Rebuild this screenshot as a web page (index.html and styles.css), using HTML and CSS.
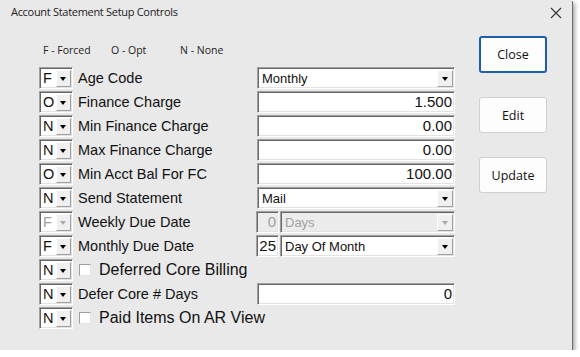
FILE: index.html
```html
<!DOCTYPE html>
<html>
<head lang="en">
    <meta charset="UTF-8">
    <title>Account Statement Setup Controls</title>
    <link rel="stylesheet" href="styles.css">
</head>
<body>
<div class="window">
    <div class="titlebar">
        <span class="title">Account Statement Setup Controls</span>
        <svg class="close-x" width="12" height="12" viewBox="0 0 12 12">
            <path d="M1 1 L11 11 M11 1 L1 11" stroke="#333" stroke-width="1.1" fill="none"/>
        </svg>
    </div>
    <div class="body">
        <div class="form">
            <div class="legend">
                <span class="leg leg-f">F - Forced</span>
                <span class="leg leg-o">O - Opt</span>
                <span class="leg">N - None</span>
            </div>

            <div class="row">
                <div class="code"><span class="code-val">F</span><span class="btn-drop"><i class="tri"></i></span></div>
                <span class="label">Age Code</span>
                <div class="field select"><span class="sel-text">Monthly</span><span class="btn-drop"><i class="tri"></i></span></div>
            </div>
            <div class="row">
                <div class="code"><span class="code-val">O</span><span class="btn-drop"><i class="tri"></i></span></div>
                <span class="label">Finance Charge</span>
                <div class="field num">1.500</div>
            </div>
            <div class="row">
                <div class="code"><span class="code-val">N</span><span class="btn-drop"><i class="tri"></i></span></div>
                <span class="label">Min Finance Charge</span>
                <div class="field num">0.00</div>
            </div>
            <div class="row">
                <div class="code"><span class="code-val">N</span><span class="btn-drop"><i class="tri"></i></span></div>
                <span class="label">Max Finance Charge</span>
                <div class="field num">0.00</div>
            </div>
            <div class="row">
                <div class="code"><span class="code-val">O</span><span class="btn-drop"><i class="tri"></i></span></div>
                <span class="label">Min Acct Bal For FC</span>
                <div class="field num">100.00</div>
            </div>
            <div class="row">
                <div class="code"><span class="code-val">N</span><span class="btn-drop"><i class="tri"></i></span></div>
                <span class="label">Send Statement</span>
                <div class="field select"><span class="sel-text">Mail</span><span class="btn-drop"><i class="tri"></i></span></div>
            </div>
            <div class="row">
                <div class="code disabled"><span class="code-val">F</span><span class="btn-drop"><i class="tri"></i></span></div>
                <span class="label">Weekly Due Date</span>
                <div class="pair">
                    <div class="field day disabled">0</div>
                    <div class="field select disabled"><span class="sel-text">Days</span><span class="btn-drop"><i class="tri"></i></span></div>
                </div>
            </div>
            <div class="row">
                <div class="code"><span class="code-val">F</span><span class="btn-drop"><i class="tri"></i></span></div>
                <span class="label">Monthly Due Date</span>
                <div class="pair">
                    <div class="field day">25</div>
                    <div class="field select"><span class="sel-text">Day Of Month</span><span class="btn-drop"><i class="tri"></i></span></div>
                </div>
            </div>
            <div class="row">
                <div class="code"><span class="code-val">N</span><span class="btn-drop"><i class="tri"></i></span></div>
                <span class="check"></span>
                <span class="check-label">Deferred Core Billing</span>
            </div>
            <div class="row">
                <div class="code"><span class="code-val">N</span><span class="btn-drop"><i class="tri"></i></span></div>
                <span class="label">Defer Core # Days</span>
                <div class="field num">0</div>
            </div>
            <div class="row">
                <div class="code"><span class="code-val">N</span><span class="btn-drop"><i class="tri"></i></span></div>
                <span class="check"></span>
                <span class="check-label">Paid Items On AR View</span>
            </div>
        </div>
        <div class="actions">
            <button class="btn btn-default">Close</button>
            <button class="btn">Edit</button>
            <button class="btn">Update</button>
        </div>
    </div>
</div>
</body>
</html>
```

FILE: styles.css
```css
*{
    margin: 0;
    padding: 0;
    box-sizing: border-box;
}
body{
    background: #fff;
    font-family: "Liberation Sans", Arial, sans-serif;
}
.window{
    width: 572px;
    height: 350px;
    background: #e9e9e9;
    box-shadow: 1px 1px 0 #6e6e6e, 3px 3px 4px rgba(0,0,0,0.35);
}
.titlebar{
    height: 30px;
    display: flex;
    justify-content: space-between;
    padding: 4px 10px 0 11px;
}
.title{
    font-family: "Open Sans", "Noto Sans", sans-serif;
    font-size: 11px;
    letter-spacing: -0.3px;
    line-height: 16px;
    color: #222;
}
.close-x{
    margin-top: 3px;
}
.body{
    display: flex;
    padding-left: 39px;
}
.form{
    width: 416px;
}
.legend{
    height: 37px;
    padding: 13px 0 0 4px;
    font-family: "Open Sans", "Noto Sans", sans-serif;
    font-size: 10.5px;
    line-height: 14px;
    color: #222;
    display: flex;
}
.leg-f{
    width: 68px;
}
.leg-o{
    width: 69px;
}
.row{
    height: 22px;
    margin-bottom: 2px;
    display: flex;
    align-items: center;
}
.code{
    width: 34px;
    height: 22px;
    display: flex;
    background: #fff;
    border: 1px solid;
    border-color: #a0a0a0 #fff #fff #a0a0a0;
    box-shadow: inset 1px 1px 0 #696969, inset -1px -1px 0 #e3e3e3;
    padding: 2px 1px 1px 2px;
}
.code-val{
    width: 14px;
    font-size: 14.5px;
    line-height: 17px;
    padding-left: 1px;
    color: #111;
}
.btn-drop{
    width: 16px;
    height: 17px;
    background: #f0f0f0;
    border: 1px solid;
    border-color: #fff #a0a0a0 #a0a0a0 #fff;
    display: flex;
    align-items: center;
    justify-content: center;
}
.tri{
    width: 0;
    height: 0;
    border-left: 3.5px solid transparent;
    border-right: 3.5px solid transparent;
    border-top: 4px solid #000;
}
.disabled .code-val,
.disabled .sel-text{
    color: #a0a0a0;
}
.disabled .tri{
    border-top-color: #a8a8a8;
}
.label{
    width: 184px;
    padding-left: 5px;
    font-size: 14.5px;
    color: #111;
    white-space: nowrap;
}
.field{
    height: 22px;
    background: #fff;
    border: 1px solid;
    border-color: #a0a0a0 #fff #fff #a0a0a0;
    box-shadow: inset 1px 1px 0 #696969, inset -1px -1px 0 #e3e3e3;
}
.field.disabled{
    background: #ececec;
}
.num{
    width: 198px;
    font-size: 15px;
    line-height: 20px;
    text-align: right;
    padding-right: 2px;
    color: #111;
}
.select{
    width: 198px;
    display: flex;
    justify-content: space-between;
    padding: 2px 1px 1px 2px;
}
.sel-text{
    font-size: 13px;
    line-height: 17px;
    padding-left: 2px;
    color: #111;
}
.pair{
    display: flex;
    gap: 1px;
    margin-left: -1px;
}
.day{
    width: 23px;
    font-size: 15px;
    line-height: 20px;
    text-align: right;
    padding-right: 2px;
    color: #111;
}
.day.disabled{
    color: #a0a0a0;
}
.pair .select{
    width: 175px;
}
.check{
    width: 12px;
    height: 12px;
    margin-left: 6px;
    background: #fff;
    border: 1px solid;
    border-color: #a0a0a0 #e3e3e3 #e3e3e3 #a0a0a0;
}
.check-label{
    padding-left: 8px;
    font-size: 16px;
    color: #111;
    white-space: nowrap;
}
.actions{
    margin-left: 24px;
    padding-top: 6px;
    display: flex;
    flex-direction: column;
    gap: 24px;
}
.btn{
    width: 68px;
    height: 36px;
    background: #fdfdfd;
    border: 1px solid #cfcfcf;
    border-radius: 3px;
    font-family: "Open Sans", "Noto Sans", sans-serif;
    font-size: 12.5px;
    color: #111;
}
.btn-default{
    height: 37px;
    border: 2px solid #1d5fa9;
}
```
